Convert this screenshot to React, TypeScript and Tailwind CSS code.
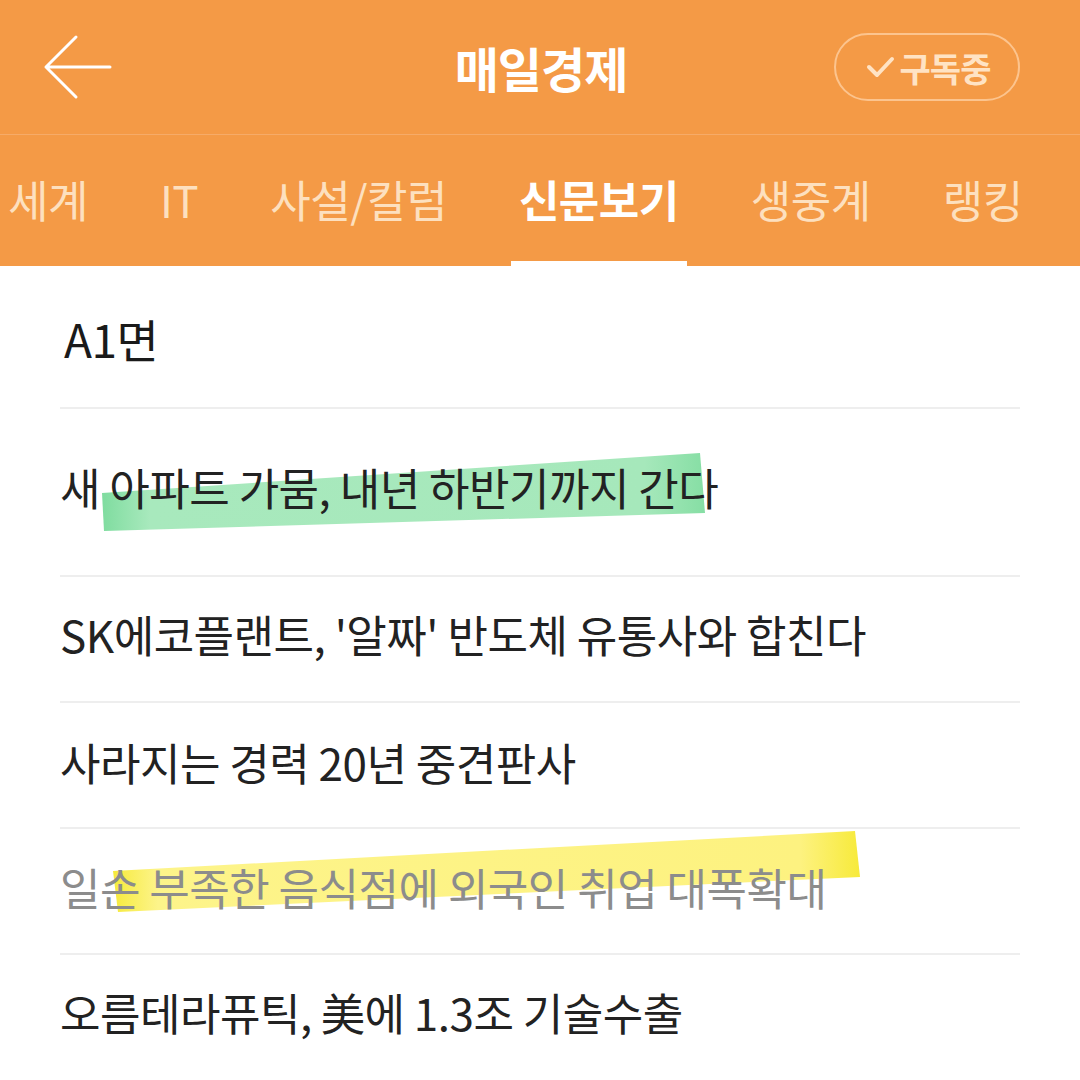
import React from "react";

// ─── Data ─────────────────────────────────────────────────────────────────────

const TABS = ["세계", "IT", "사설/칼럼", "신문보기", "생중계", "랭킹"];
const ACTIVE_TAB = "신문보기";

type Article = {
  title: string;
  height: string;
  muted?: boolean;
  mark?: "green" | "yellow";
};

const ARTICLES: Article[] = [
  { title: "새 아파트 가뭄, 내년 하반기까지 간다", height: "h-[168px] pt-[48px]", mark: "green" },
  { title: "SK에코플랜트, '알짜' 반도체 유통사와 합친다", height: "h-[126px] pt-[27px]" },
  { title: "사라지는 경력 20년 중견판사", height: "h-[126px] pt-[29px]" },
  { title: "일손 부족한 음식점에 외국인 취업 대폭확대", height: "h-[126px] pt-[28px]", muted: true, mark: "yellow" },
  { title: "오름테라퓨틱, 美에 1.3조 기술수출", height: "h-[126px] pt-[27px]" },
];

const FONT = { fontFamily: '"Noto Sans CJK KR", "Noto Sans", sans-serif' };

// ─── Highlighter marks ────────────────────────────────────────────────────────

function Mark({ kind }: { kind: "green" | "yellow" }) {
  if (kind === "green") {
    return (
      <svg className="absolute inset-0 w-full h-full pointer-events-none" viewBox="0 0 1080 168" preserveAspectRatio="none">
        <defs>
          <linearGradient id="mark-green" x1="0" y1="0" x2="1" y2="0">
            <stop offset="0%" stopColor="#7fdc9f" />
            <stop offset="8%" stopColor="#a8e9bd" />
            <stop offset="90%" stopColor="#a6e8bb" />
            <stop offset="100%" stopColor="#86dea4" />
          </linearGradient>
        </defs>
        <polygon points="102,84 700,44 705,104 104,122" fill="url(#mark-green)" />
      </svg>
    );
  }
  return (
    <svg className="absolute inset-0 w-full h-full pointer-events-none" viewBox="0 0 1080 126" preserveAspectRatio="none">
      <defs>
        <linearGradient id="mark-yellow" x1="0" y1="0" x2="1" y2="0">
          <stop offset="0%" stopColor="#f6ea3c" />
          <stop offset="6%" stopColor="#fdf48a" />
          <stop offset="92%" stopColor="#fdf280" />
          <stop offset="100%" stopColor="#f7ea3a" />
        </linearGradient>
      </defs>
      <polygon points="113,42 855,2 860,48 118,83" fill="url(#mark-yellow)" />
    </svg>
  );
}

// ─── Page ─────────────────────────────────────────────────────────────────────

export default function App() {
  return (
    <div className="w-[1080px] h-[1080px] overflow-hidden bg-white" style={FONT}>
      {/* Top bar */}
      <div className="bg-[#f49a46]">
        <div className="h-[135px] flex items-center relative border-b border-[#f6ab68]">
          <svg className="ml-[42px]" width="72" height="66" viewBox="0 0 72 66" fill="none">
            <path d="M68 33H4M34 3L4 33l30 30" stroke="#fff" strokeWidth="3" strokeLinecap="round" strokeLinejoin="round" />
          </svg>
          <div className="absolute left-0 right-0 top-0 h-full flex items-center justify-center pointer-events-none">
            <span className="text-[48px] font-bold text-white tracking-[-1px] pl-[2px]">매일경제</span>
          </div>
          <div className="ml-auto mr-[60px] h-[68px] w-[186px] rounded-full border-2 border-[#fcc48e] flex items-center justify-center gap-[2px] text-[#ffe3c4]">
            <svg width="34" height="28" viewBox="0 0 34 28" fill="none">
              <path d="M5 14l8 8L28 6" stroke="#ffe3c4" strokeWidth="4" strokeLinecap="round" strokeLinejoin="round" />
            </svg>
            <span className="text-[34px] font-bold tracking-[-1px]">구독중</span>
          </div>
        </div>

        {/* Tabs */}
        <div className="h-[131px] flex items-stretch gap-[56px] whitespace-nowrap">
          {TABS.map((t) => {
            const active = t === ACTIVE_TAB;
            return (
              <div
                key={t}
                className={`px-[8px] flex items-center pt-[2px] border-b-[5px] ${
                  active ? "border-white text-white font-bold" : "border-transparent text-[#fde0bf]"
                } text-[44px] tracking-[-0.5px]`}
              >
                {t}
              </div>
            );
          })}
        </div>
      </div>

      {/* Content */}
      <div className="px-[60px]">
        <div className="h-[143px] pt-[38px] border-b-2 border-[#eeeeee]">
          <span className="text-[46px] text-[#1a1a1a] pl-[4px] tracking-[-0.5px]">A1면</span>
        </div>
        {ARTICLES.map((a, i) => (
          <div key={i} className={`${a.height} relative -mx-[60px] px-[60px]`}>
            {a.mark && <Mark kind={a.mark} />}
            <p
              className={`relative text-[44px] leading-[60px] tracking-[-0.5px] whitespace-nowrap ${
                a.muted ? "text-[#8c8c8c]" : "text-[#222222]"
              }`}
            >
              {a.title}
            </p>
            {i < ARTICLES.length - 1 && (
              <div className="absolute left-[60px] right-[60px] bottom-0 h-[2px] bg-[#eeeeee]" />
            )}
          </div>
        ))}
      </div>
    </div>
  );
}
